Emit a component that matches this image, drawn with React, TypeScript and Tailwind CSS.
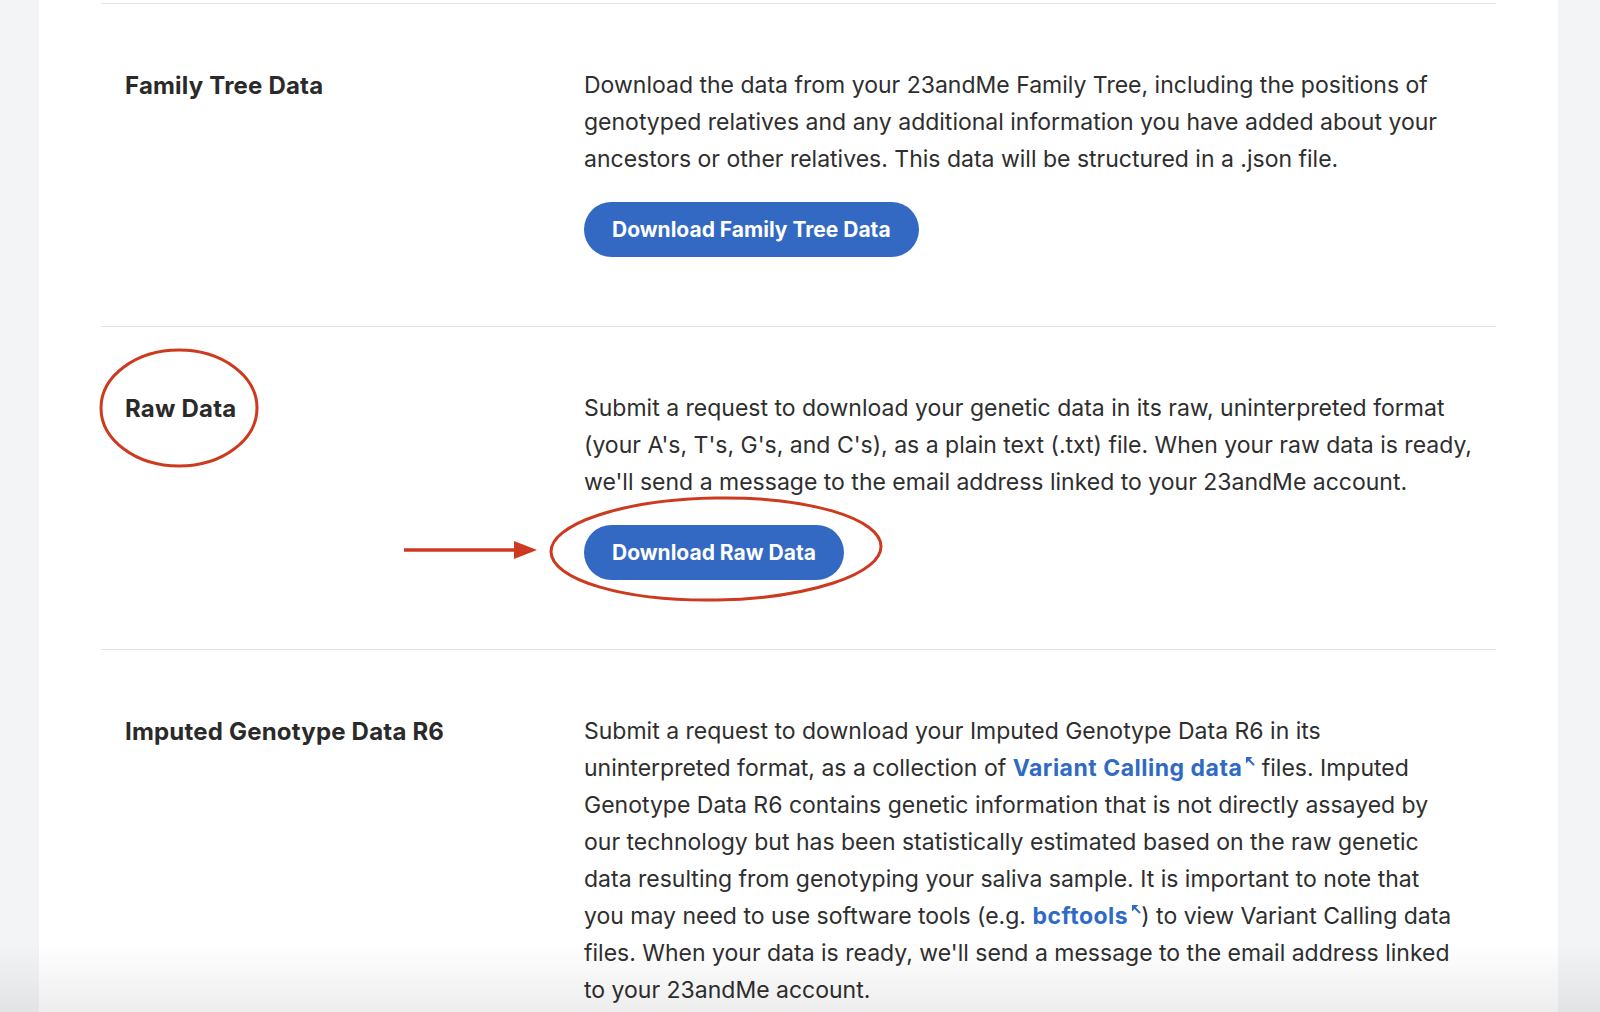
import React from 'react';

const font = { fontFamily: 'Inter, "Noto Sans", sans-serif' };

function ExtIcon() {
  return (
    <svg width="9" height="9" viewBox="0 0 9 9" className="inline-block align-top ml-[4px] mt-[7px]">
      <polygon points="0,0 6.5,0 0,6.5" fill="#2f6bc4" />
      <line x1="1.5" y1="1.5" x2="7.5" y2="7.5" stroke="#2f6bc4" strokeWidth="2" strokeLinecap="round" />
    </svg>
  );
}

function Ext({ children }: { children: React.ReactNode }) {
  return (
    <a className="font-bold tracking-[0.5px] text-[#2f6bc4] whitespace-nowrap">
      {children}
      <ExtIcon />
    </a>
  );
}

function Section({
  title,
  children,
  button,
  titleMark,
  buttonMark,
}: {
  title: string;
  children: React.ReactNode;
  button?: string;
  titleMark?: boolean;
  buttonMark?: boolean;
}) {
  return (
    <div className="flex border-t border-[#e3e4e6] pt-[63px] pb-[69px]">
      <div className="relative w-[483px] shrink-0 pl-6">
        <h3 className="text-[24px] leading-[37px] font-bold tracking-[0.2px] text-[#2a2a2a]">{title}</h3>
        {titleMark && (
          <svg
            className="pointer-events-none absolute left-[-5px] top-[-45px]"
            width="166"
            height="126"
            viewBox="0 0 166 126"
          >
            <ellipse cx="83" cy="63" rx="78" ry="58" fill="none" stroke="#cd3a1f" strokeWidth="3" />
          </svg>
        )}
      </div>
      <div className="flex-1 text-[23px] leading-[37px] text-[#2e2e2e]">
        <p>{children}</p>
        {button && (
          <div className="relative mt-6 flex">
            {buttonMark && (
              <>
                <svg
                  className="pointer-events-none absolute left-[-184px] top-[13px]"
                  width="140"
                  height="24"
                  viewBox="0 0 140 24"
                >
                  <line x1="4" y1="12" x2="118" y2="12" stroke="#cd3a1f" strokeWidth="3.5" />
                  <polygon points="114,3 137,12 114,21" fill="#cd3a1f" />
                </svg>
                <svg
                  className="pointer-events-none absolute left-[-38px] top-[-31px]"
                  width="340"
                  height="112"
                  viewBox="0 0 340 112"
                >
                  <ellipse
                    cx="170"
                    cy="55"
                    rx="165"
                    ry="51"
                    fill="none"
                    stroke="#cd3a1f"
                    strokeWidth="3"
                    transform="rotate(-1 170 55)"
                  />
                </svg>
              </>
            )}
            <button className="h-[55px] rounded-full bg-[#3369c3] px-7 text-[21px] font-bold text-white">
              {button}
            </button>
          </div>
        )}
      </div>
    </div>
  );
}

export default function App() {
  return (
    <div className="relative h-[1012px] overflow-hidden bg-[#f3f4f6]" style={font}>
      <div className="ml-[39px] h-full w-[1519px] bg-white px-[62px] pt-[3px]">
        <Section title="Family Tree Data" button="Download Family Tree Data">
          Download the data from your 23andMe Family Tree, including the positions of
          <br />
          genotyped relatives and any additional information you have added about your
          <br />
          ancestors or other relatives. This data will be structured in a .json file.
        </Section>

        <Section title="Raw Data" button="Download Raw Data" titleMark buttonMark>
          Submit a request to download your genetic data in its raw, uninterpreted format
          <br />
          (your A's, T's, G's, and C's), as a plain text (.txt) file. When your raw data is ready,
          <br />
          we'll send a message to the email address linked to your 23andMe account.
        </Section>

        <Section title="Imputed Genotype Data R6">
          Submit a request to download your Imputed Genotype Data R6 in its
          <br />
          uninterpreted format, as a collection of <Ext>Variant Calling data</Ext> files. Imputed
          <br />
          Genotype Data R6 contains genetic information that is not directly assayed by
          <br />
          our technology but has been statistically estimated based on the raw genetic
          <br />
          data resulting from genotyping your saliva sample. It is important to note that
          <br />
          you may need to use software tools (e.g. <Ext>bcftools</Ext>) to view Variant Calling data
          <br />
          files. When your data is ready, we'll send a message to the email address linked
          <br />
          to your 23andMe account.
        </Section>
      </div>
      {/* soft fade at the bottom edge */}
      <div className="pointer-events-none absolute inset-x-0 bottom-0 h-[70px] bg-gradient-to-b from-transparent to-black/[0.07]" />
    </div>
  );
}
